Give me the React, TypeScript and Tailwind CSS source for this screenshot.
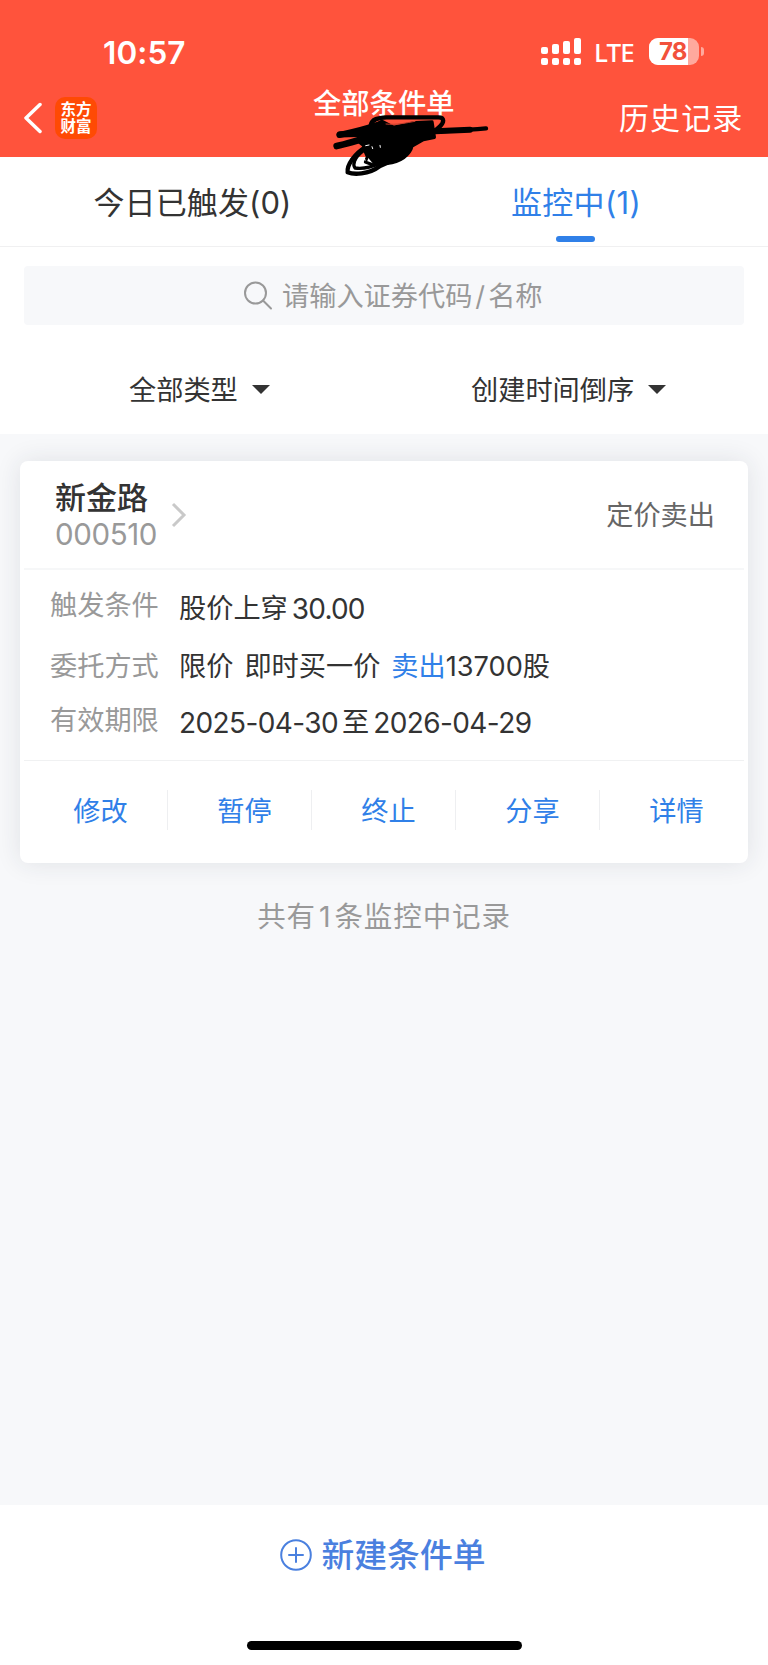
import type { ReactNode } from 'react';

interface RowProps {
  label: string;
  labelClass: string;
  className: string;
  children: ReactNode;
}

const signalBars = ['h-[7px]', 'h-[10px]', 'h-[13px]', 'h-[16px]'];

const filters = [
  { label: '全部类型', className: 'pl-[129px] w-[471px]' },
  { label: '创建时间倒序', className: '' },
];

const actions = ['修改', '暂停', '终止', '分享', '详情'];

function StatusBar() {
  return (
    <div className="flex h-[80px] pt-[38px] pl-[103px]">
      <span className="w-[438px] pt-px text-[31.500px] leading-[28px] font-semibold tracking-[0.100px]">10:57</span>
      <div className="flex h-[27px] items-end gap-1">
        {signalBars.map((height) => (
          <div key={height} className="flex flex-col gap-1">
            <span className={`w-[7px] rounded-[2px] bg-white ${height}`} />
            <span className="h-[7px] w-[7px] rounded-[2px] bg-white" />
          </div>
        ))}
      </div>
      <span className="ml-[13px] w-[55px] font-['Noto_Sans'] text-[26px] leading-[29px] font-medium tracking-[-0.900px]">LTE</span>
      <div className="flex h-[27px] items-center gap-[2px]">
        <div className="flex h-[27px] w-[50px] overflow-hidden rounded-[9px] bg-[#ffa99d]">
          <span className="w-[39px] bg-white pl-[10px] text-[24px] leading-[28px] font-bold tracking-[-0.800px] text-[#f2513c]">78</span>
        </div>
        <span className="h-[9px] w-[3px] rounded-r-full bg-[#ffa99d]" />
      </div>
    </div>
  );
}

function Scribble() {
  return (
    <svg className="absolute top-[80px] left-[300px] h-[110px] w-[220px]" viewBox="0 0 660 330" fill="none" stroke="#000" strokeLinecap="round" strokeLinejoin="round">
      <path d="M212 136C215 117 235 113 260 112L415 112C435 112 432 128 420 139L402 155" strokeWidth="13" />
      <path d="M118 165C160 156 200 146 245 131" strokeWidth="18" />
      <path d="M110 198C150 190 185 178 240 160" strokeWidth="20" />
      <path d="M120 163L200 161L260 150" strokeWidth="19" />
      <path d="M400 154C440 154 500 150 558 145" strokeWidth="13" />
      <path d="M405 154L510 149" strokeWidth="18" />
      <path d="M212 145L245 124L280 142L345 128L396 126L403 172L370 179L336 198C330 225 300 246 262 250L225 250L205 226L190 196L178 186L208 172Z" fill="#000" strokeWidth="10" />
      <path d="M196 202C165 220 140 255 143 277C160 284 205 285 240 258L262 248" strokeWidth="13" />
      <path d="M190 212C160 235 158 255 165 264C190 268 225 260 250 245" strokeWidth="10" />
      <path d="M190 203L202 230L196 246L220 255" strokeWidth="9" />
      <path d="M197 197L207 195M216 200L218 206M240 196L241 202M172 244L182 243M190 238L196 240" stroke="#fff" strokeWidth="3" />
      <path d="M258 132C290 136 320 128 345 124" stroke="#c23d2c" strokeWidth="3" />
    </svg>
  );
}

function Header() {
  return (
    <header className="relative h-[157px] bg-[#ff533c] text-white">
      <StatusBar />
      <div className="flex h-[77px] items-center pl-[24px]">
        <svg className="mb-px h-[32px] w-[31px]" viewBox="0 0 31 32" fill="none" stroke="currentColor" strokeWidth="3.500" strokeLinecap="round" strokeLinejoin="round">
          <path d="M16 2.500L2 16L16 29.500" />
        </svg>
        <div className="mb-px flex h-[42px] w-[42px] flex-col items-center justify-center rounded-[10px] bg-[#ff4a04] text-[15.500px] leading-[17px] font-bold">
          <span>东方</span>
          <span>财富</span>
        </div>
        <h1 className="mb-[30px] ml-[216px] w-[306px] text-[28.300px] leading-[32px] font-medium">全部条件单</h1>
        <span className="mb-[2px] text-[30px] leading-[36px] tracking-[1.100px]">历史记录</span>
      </div>
      <Scribble />
    </header>
  );
}

function Tabs() {
  return (
    <nav className="grid h-[90px] grid-cols-2 border-b border-[#f0f0f1] text-[31px] leading-[36px]">
      <div className="pt-[28px] pl-px text-center tracking-[0.100px]">今日已触发(0)</div>
      <div className="flex flex-col items-center pt-[28px] tracking-[0.300px] text-[#3080e8]">
        <span>监控中(1)</span>
        <span className="mt-[15px] mr-px h-[6px] w-[39px] rounded-full bg-[#3080e8]" />
      </div>
    </nav>
  );
}

function Row({ label, labelClass, className, children }: RowProps) {
  return (
    <div className={`-ml-1 flex items-start pl-[30px] leading-[32px] ${className}`}>
      <span className={`w-[129px] text-[27.200px] text-[#999] ${labelClass}`}>{label}</span>
      <div className="flex text-[27.200px] whitespace-pre">{children}</div>
    </div>
  );
}

function OrderCard() {
  return (
    <section className="mx-[20px] h-[402px] rounded-[8px] bg-white shadow-[0_0_26px_rgba(40,45,60,0.11)]">
      <div className="mx-1 flex h-[109px] items-center border-b-2 border-[#f6f7f8]">
        <div className="w-[118px] pt-[3px] pl-[31px]">
          <div className="text-[31px] leading-[36px] font-medium whitespace-nowrap">新金路</div>
          <div className="text-[29.500px] leading-[37px] tracking-[-0.400px] text-[#999]">000510</div>
        </div>
        <svg className="ml-[29px] h-[26px] w-[16px]" viewBox="0 0 16 26" fill="none" stroke="#c9c9c9" strokeWidth="3">
          <path d="M2 2L13 13L2 24" />
        </svg>
        <span className="mt-[3px] mr-[29px] ml-auto text-[27.200px] text-[#666]">定价卖出</span>
      </div>
      <div className="mx-1 h-[191px] border-b border-[#f0f1f2]">
        <Row label="触发条件" labelClass="-translate-y-[3px]" className="pt-[23px]">
          <span>股价上穿</span>
          <span className="ml-1 text-[28px] tracking-[-0.800px]">30.00</span>
        </Row>
        <Row label="委托方式" labelClass="" className="pt-[26px]">
          <span>限价</span>
          <span className="ml-[11px]">即时买一价</span>
          <span className="ml-[11px] text-[#3080e8]">卖出</span>
          <span>13700股</span>
        </Row>
        <Row label="有效期限" labelClass="-translate-y-[2px]" className="pt-[24px]">
          <span className="text-[28px] tracking-[-0.600px]">2025-04-30</span>
          <span className="mx-1">至</span>
          <span className="text-[28px] tracking-[-0.600px]">2026-04-29</span>
        </Row>
      </div>
      <div className="mx-1 flex h-[100px] pt-[29px]">
        {actions.map((action) => (
          <button key={action} className="h-[40px] flex-1 border-r border-[#eeeff1] pt-[2px] pl-[10px] text-[27.200px] leading-[40px] text-[#3080e8] last:border-transparent">
            {action}
          </button>
        ))}
      </div>
    </section>
  );
}

export default function App() {
  return (
    <div className="flex h-[1665px] w-[768px] flex-col bg-[#f7f8fa] font-['Inter','Noto_Sans_CJK_SC',sans-serif] text-[#333]">
      <Header />
      <div className="h-[277px] bg-white">
        <Tabs />
        <div className="mx-[24px] mt-[19px] flex h-[59px] items-center rounded-[4px] bg-[#f7f8fa] pl-[219px] text-[#999]">
          <svg className="h-[30px] w-[30px]" viewBox="0 0 30 30" fill="none" stroke="currentColor" strokeWidth="2" strokeLinecap="round">
            <circle cx="12.500" cy="12" r="10.500" />
            <path d="M20 19.500L28 27.500" />
          </svg>
          <span className="mt-[2px] ml-[9px] text-[27.200px] leading-[32px]">
            请输入证券代码<span className="mx-[3px]">/</span>名称
          </span>
        </div>
        <div className="flex h-[108px] items-center pt-[20px] text-[27.200px] leading-[32px]">
          {filters.map(({ label, className }) => (
            <div key={label} className={`flex items-center gap-[14px] ${className}`}>
              <span className="pt-[3px]">{label}</span>
              <svg className="h-[9px] w-[18px]" viewBox="0 0 18 9" fill="currentColor">
                <path d="M0 0H18L9 9Z" />
              </svg>
            </div>
          ))}
        </div>
      </div>
      <main className="flex-1 pt-[27px]">
        <OrderCard />
        <p className="mt-[36px] text-center text-[28.500px] leading-[36px] tracking-[0.900px] text-[#999]">
          共有<span className="mx-[3px]">1</span>条监控中记录
        </p>
      </main>
      <footer className="flex h-[160px] flex-col items-center bg-white">
        <button className="mt-[31px] mr-[3px] flex h-[38px] items-center gap-[10px] text-[32.800px] leading-[38px] font-medium text-[#4a80df]">
          <svg className="mb-px h-[32px] w-[32px]" viewBox="0 0 32 32" fill="none" stroke="currentColor" strokeWidth="2" strokeLinecap="round">
            <circle cx="16" cy="16" r="14.800" />
            <path d="M16 9V23M9 16H23" />
          </svg>
          新建条件单
        </button>
        <div className="mt-[67px] h-[9px] w-[275px] rounded-full bg-black" />
      </footer>
    </div>
  );
}
